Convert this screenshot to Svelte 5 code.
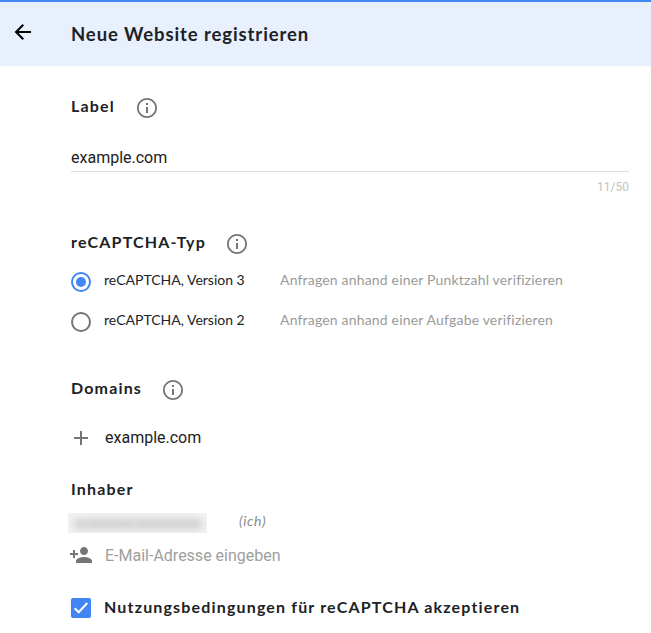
<script>
  let version = $state(3);
  const types = [
    { v: 3, note: 'Anfragen anhand einer Punktzahl verifizieren' },
    { v: 2, note: 'Anfragen anhand einer Aufgabe verifizieren' }
  ];
</script>

{#snippet info()}
  <svg class="info" width="24" height="24" viewBox="0 0 24 24" fill="#757575">
    <path d="M11 17h2v-6h-2v6zm1-15C6.480 2 2 6.480 2 12s4.480 10 10 10 10-4.480 10-10S17.520 2 12 2zm0 18.200c-4.520 0-8.200-3.680-8.200-8.200S7.480 3.800 12 3.800s8.200 3.680 8.200 8.200-3.680 8.200-8.200 8.200zM11 9h2V7h-2v2z" />
  </svg>
{/snippet}

<div class="page">
  <header>
    <svg class="back" width="24" height="24" viewBox="0 0 24 24" fill="none" stroke="#000" stroke-width="2">
      <path d="M20 12H5.500M12.300 4.700L5 12l7.300 7.300" />
    </svg>
    <h1>Neue Website registrieren</h1>
  </header>

  <main>
    <div class="heading label"><h2 class="t-label">Label</h2>{@render info()}</div>
    <div class="field">example.com</div>
    <div class="counter">11/50</div>

    <div class="heading type"><h2 class="t-type">reCAPTCHA-Typ</h2>{@render info()}</div>
    {#each types as t}
      <div class="option" role="radio" tabindex="-1" aria-checked={version === t.v} onclick={() => (version = t.v)} onkeydown={() => (version = t.v)}>
        <span class="radio" class:on={version === t.v}></span>
        <span class="name">reCAPTCHA, Version {t.v}</span>
        <span class="note">{t.note}</span>
      </div>
    {/each}

    <div class="heading domains"><h2 class="t-domains">Domains</h2>{@render info()}</div>
    <div class="entry domain">
      <svg width="20" height="20" viewBox="0 0 20 20" stroke="#757575" stroke-width="2"><path d="M3 10h14M10 3v14" /></svg>
      <span>example.com</span>
    </div>

    <h2 class="owner-title">Inhaber</h2>
    <div class="owner">
      <div class="hidden-mail"><i></i><i></i><i></i></div>
      <span class="me">(ich)</span>
    </div>
    <div class="entry mail">
      <svg width="24" height="24" viewBox="0 0 24 24" fill="#757575">
        <path d="M15 12c2.210 0 4-1.790 4-4s-1.790-4-4-4-4 1.790-4 4 1.790 4 4 4zm-9-2V7H4v3H1v2h3v3h2v-3h3v-2H6zm9 4c-2.670 0-8 1.340-8 4v2h16v-2c0-2.660-5.330-4-8-4z" />
      </svg>
      <span>E-Mail-Adresse eingeben</span>
    </div>

    <div class="terms">
      <span class="box">
        <svg width="20" height="20" viewBox="0 0 20 20" fill="none" stroke="#fff" stroke-width="2"><path d="M3.700 10.300l4 4L16.300 5" /></svg>
      </span>
      <h2>Nutzungsbedingungen für reCAPTCHA akzeptieren</h2>
    </div>
  </main>
</div>

<style>
  :global(body) { margin: 0; background: #fff; }
  .page {
    width: 651px;
    height: 633px;
    overflow: hidden;
    background: #fff;
    color: #202124;
    font-family: Lato, "Open Sans", sans-serif;
  }
  svg { display: block; flex: none; }
  header {
    box-sizing: border-box;
    height: 66px;
    border-top: 2px solid #4285f4;
    background: #e8f0fe;
    display: flex;
    align-items: center;
    padding-left: 11px;
  }
  .back { margin: 0 36px 4px 0; }
  h1, h2 { margin: 0; font-weight: 700; white-space: nowrap; }
  h1 { font-size: 18.500px; letter-spacing: 0.900px; padding-bottom: 1px; }
  h2 { font-size: 16px; letter-spacing: 1.160px; line-height: 20px; padding-bottom: 2px; }
  main { padding: 0 22px 0 71px; }
  .heading { display: flex; align-items: center; height: 40px; }
  .heading .info { margin-top: 2px; }
  .label { margin-top: 21px; }
  .t-label { width: 64px; }
  .t-type { width: 154px; }
  .t-domains { width: 90px; }
  .field {
    margin-top: 16px;
    height: 28px;
    border-bottom: 1px solid #dedede;
    font: 16px/29px Roboto, sans-serif;
    color: #212121;
  }
  .counter {
    height: 30px;
    text-align: right;
    font: 12px/30px Roboto, sans-serif;
    color: #c4c4c4;
  }
  .type { height: 36px; margin-top: 23px; }
  .option { display: flex; align-items: center; height: 40px; font-size: 14px; white-space: nowrap; }
  .radio {
    box-sizing: border-box;
    flex: none;
    width: 20px;
    height: 20px;
    border: 2px solid #757575;
    border-radius: 50%;
    margin: 2px 13px 0 0;
    display: flex;
    align-items: center;
    justify-content: center;
  }
  .radio.on { border-color: #4285f4; }
  .radio.on::after { content: ""; width: 10px; height: 10px; border-radius: 50%; background: #4285f4; }
  .name { width: 176px; padding-bottom: 3px; }
  .note { color: #9a9a9a; letter-spacing: 0.180px; padding-bottom: 3px; }
  .domains { margin-top: 28px; }
  .entry { display: flex; align-items: center; height: 40px; font: 16px/20px Roboto, sans-serif; color: #212121; }
  .domain { margin-top: 9px; gap: 14px; }
  .owner-title { margin-top: 21px; height: 20px; }
  .owner { display: flex; align-items: center; height: 20px; margin: 12px 0 0 -3px; }
  .hidden-mail {
    width: 139px;
    height: 20px;
    overflow: hidden;
    background: #f3f3f3;
    display: flex;
    align-items: center;
    gap: 0;
    margin-right: 32px;
  }
  .hidden-mail i { height: 8px; background: #c6c6c6; filter: blur(4px); width: 68px; margin-top: 2px; }
  .hidden-mail i:first-child { width: 12px; margin-left: 6px; }
  .hidden-mail i:nth-child(2) { width: 48px; }
  .me { font-size: 14px; letter-spacing: 0.600px; font-style: italic; color: #8a8a8a; line-height: 16px; margin-bottom: 4px; }
  .mail { margin: 2px 0 0 -2px; gap: 12px; color: #9e9e9e; }
  .mail span { padding-top: 1px; }
  .terms { display: flex; align-items: center; height: 40px; margin-top: 13px; gap: 13px; }
  .box { width: 20px; height: 20px; border-radius: 2px; background: #4285f4; flex: none; }
</style>
